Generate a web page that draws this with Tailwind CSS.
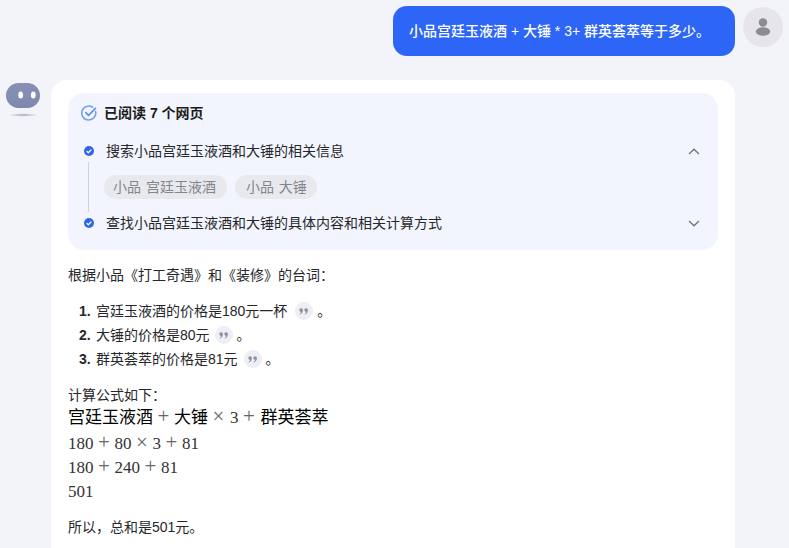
<!DOCTYPE html>
<html lang="zh">
<head>
<meta charset="utf-8">
<script src="https://cdn.jsdelivr.net/npm/@tailwindcss/browser@4"></script>
</head>
<body class="m-0 h-[548px] w-[789px] overflow-hidden bg-[#f3f4f9] font-['Liberation_Sans','Noto_Sans_CJK_SC',sans-serif] text-[14px] text-[#26272b]">
<main class="flex flex-col gap-6 pt-[6px]">
  <section class="flex justify-end gap-2 pr-[6px]">
    <div class="flex h-[50px] w-[342px] items-center rounded-[14px] bg-[#2d66f6] pl-4 font-medium text-white">小品宫廷玉液酒 + 大锤 * 3+ 群英荟萃等于多少。</div>
    <div class="mt-px flex size-10 items-center justify-center rounded-full bg-[#e6e6ea]">
      <svg width="16" height="20" viewBox="0 0 16 20"><circle cx="8" cy="5.5" r="4.2" fill="#8b8b92"/><ellipse cx="8" cy="14.5" rx="7.2" ry="4.3" fill="#8b8b92"/></svg>
    </div>
  </section>
  <section class="flex items-start pl-[6px] pr-[54px]">
    <div class="w-[45px] shrink-0 pt-[3px]">
      <svg width="34" height="36" viewBox="0 0 34 36"><defs><linearGradient id="b" x1="0" y1="0" x2="0" y2="1"><stop offset="0" stop-color="#8890b4"/><stop offset="1" stop-color="#7e88ae"/></linearGradient><radialGradient id="s"><stop offset="0" stop-color="#a9abb5"/><stop offset="1" stop-color="#f3f4f9"/></radialGradient></defs><rect x="0" y="0" width="34" height="25" rx="12.5" fill="url(#b)"/><ellipse cx="14.7" cy="12" rx="2.4" ry="3.5" fill="#fff"/><ellipse cx="27.3" cy="12" rx="2.4" ry="3.5" fill="#fff"/><ellipse cx="17" cy="32" rx="15" ry="1.8" fill="url(#s)"/></svg>
    </div>
    <article class="h-[500px] w-[684px] rounded-t-[16px] bg-white px-[17px] pt-[13px]">
      <div class="h-[157px] rounded-[16px] bg-[#f2f5fd] px-3 pt-[10px]">
        <div class="flex items-center gap-[7px] pl-px font-bold leading-[20px] text-[#1b1c20]">
          <svg width="16" height="16" viewBox="0 0 16 16" fill="none"><path d="M14.6 6.6A7 7 0 1 1 11.6 2.2" stroke="#74a1ee" stroke-width="1.6" stroke-linecap="round"/><path d="M4.8 7.6 7.6 10.4 14.4 3.4" stroke="#5d8eea" stroke-width="1.6" stroke-linecap="round" stroke-linejoin="round"/></svg>
          <span>已阅读 7 个网页</span>
        </div>
        <div class="mt-[19px] flex h-[18px] items-center pl-[4px]">
          <svg class="shrink-0" width="10" height="10" viewBox="0 0 10 10"><circle cx="5" cy="5" r="5" fill="#2f66e6"/><path d="M2.6 5.1 4.3 6.8 7.4 3.6" fill="none" stroke="#fff" stroke-width="1.3"/></svg>
          <span class="ml-[12px] flex-1">搜索小品宫廷玉液酒和大锤的相关信息</span>
          <svg class="mr-[6px]" width="12" height="7" viewBox="0 0 12 7" fill="none"><path d="M1 6 6 1.2 11 6" stroke="#6c6e75" stroke-width="1.2"/></svg>
        </div>
        <div class="flex h-[54px] items-center">
          <div class="ml-[8px] h-[50px] w-px bg-[#cfd2da]"></div>
          <div class="ml-[15px] flex gap-2 text-[#83858c] [word-spacing:1px]">
            <span class="flex h-6 items-center rounded-full bg-[#e8e9ed] pl-[9px] pr-[11px]">小品 宫廷玉液酒</span>
            <span class="flex h-6 items-center rounded-full bg-[#e8e9ed] pl-[11px] pr-[10px]">小品 大锤</span>
          </div>
        </div>
        <div class="flex h-[18px] items-center pl-[4px]">
          <svg class="shrink-0" width="10" height="10" viewBox="0 0 10 10"><circle cx="5" cy="5" r="5" fill="#2f66e6"/><path d="M2.6 5.1 4.3 6.8 7.4 3.6" fill="none" stroke="#fff" stroke-width="1.3"/></svg>
          <span class="ml-[12px] flex-1">查找小品宫廷玉液酒和大锤的具体内容和相关计算方式</span>
          <svg class="mr-[6px]" width="12" height="7" viewBox="0 0 12 7" fill="none"><path d="M1 1 6 5.8 11 1" stroke="#6c6e75" stroke-width="1.2"/></svg>
        </div>
      </div>
      <p class="mt-[14px] leading-[22px]">根据小品《打工奇遇》和《装修》的台词：</p>
      <ol class="mt-[14px] flex flex-col gap-[2px] pl-[11px] leading-[22px]">
        <li class="flex items-center"><b class="w-[17px]">1.</b>宫廷玉液酒的价格是180元一杯<span class="ml-[8px] flex size-[18px] items-center justify-center rounded-full bg-[#eeeff5]"><svg width="10" height="7" viewBox="0 0 10 7" fill="#8e90a0"><circle cx="2.1" cy="2.1" r="1.8"/><path d="M3.9 2.1C3.9 4 2.8 5.8 1 6.6L.6 6C1.6 5.3 2.2 4.5 2.3 3.2z"/><circle cx="7.1" cy="2.1" r="1.8"/><path d="M8.9 2.1C8.9 4 7.8 5.8 6 6.6L5.6 6C6.6 5.3 7.2 4.5 7.3 3.2z"/></svg></span><span class="ml-[4px]">。</span></li>
        <li class="flex items-center"><b class="w-[17px]">2.</b>大锤的价格是80元<span class="ml-[5px] flex size-[18px] items-center justify-center rounded-full bg-[#eeeff5]"><svg width="10" height="7" viewBox="0 0 10 7" fill="#8e90a0"><circle cx="2.1" cy="2.1" r="1.8"/><path d="M3.9 2.1C3.9 4 2.8 5.8 1 6.6L.6 6C1.6 5.3 2.2 4.5 2.3 3.2z"/><circle cx="7.1" cy="2.1" r="1.8"/><path d="M8.9 2.1C8.9 4 7.8 5.8 6 6.6L5.6 6C6.6 5.3 7.2 4.5 7.3 3.2z"/></svg></span><span class="ml-[4px]">。</span></li>
        <li class="flex items-center"><b class="w-[17px]">3.</b>群英荟萃的价格是81元<span class="ml-[6px] flex size-[18px] items-center justify-center rounded-full bg-[#eeeff5]"><svg width="10" height="7" viewBox="0 0 10 7" fill="#8e90a0"><circle cx="2.1" cy="2.1" r="1.8"/><path d="M3.9 2.1C3.9 4 2.8 5.8 1 6.6L.6 6C1.6 5.3 2.2 4.5 2.3 3.2z"/><circle cx="7.1" cy="2.1" r="1.8"/><path d="M8.9 2.1C8.9 4 7.8 5.8 6 6.6L5.6 6C6.6 5.3 7.2 4.5 7.3 3.2z"/></svg></span><span class="ml-[4px]">。</span></li>
      </ol>
      <p class="mt-[14px] leading-[22px]">计算公式如下：</p>
      <div class="font-['Liberation_Serif','Noto_Sans_CJK_SC',serif] text-[17px] leading-[24px] text-[#333]">
        <div class="text-black">宫廷玉液酒<span class="mx-[4px] inline-block w-[13px] text-center text-[21px] leading-[0px] text-[#666]">+</span>大锤<span class="mx-[4px] inline-block w-[13px] text-center text-[21px] leading-[0px] text-[#666]">×</span><span class="ml-px text-[#333]">3</span><span class="mx-[4px] inline-block w-[13px] text-center text-[21px] leading-[0px] text-[#666]">+</span><span class="ml-px">群英荟萃</span></div>
        <div class="mt-[2px]">180<span class="mx-[4px] inline-block w-[13px] text-center text-[21px] leading-[0px] text-[#666]">+</span>80<span class="mx-[4px] inline-block w-[13px] text-center text-[21px] leading-[0px] text-[#666]">×</span>3<span class="mx-[4px] inline-block w-[13px] text-center text-[21px] leading-[0px] text-[#666]">+</span>81</div>
        <div>180<span class="mx-[4px] inline-block w-[13px] text-center text-[21px] leading-[0px] text-[#666]">+</span>240<span class="mx-[4px] inline-block w-[13px] text-center text-[21px] leading-[0px] text-[#666]">+</span>81</div>
        <div>501</div>
      </div>
      <p class="mt-[12px] leading-[22px]">所以，总和是501元。</p>
    </article>
  </section>
</main>
</body>
</html>
